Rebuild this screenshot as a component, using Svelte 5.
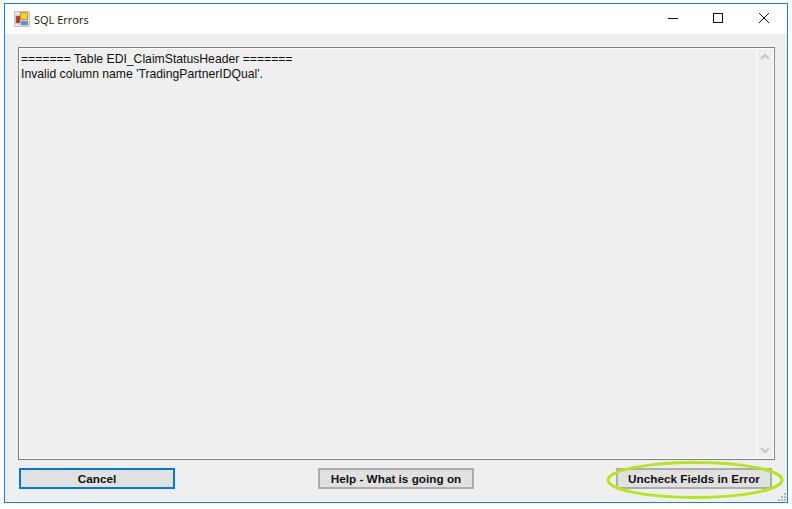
<script lang="ts">
	const lines = ['======= Table EDI_ClaimStatusHeader =======', "Invalid column name 'TradingPartnerIDQual'."];
</script>

<div class="page">
	<div class="window">
		<header class="titlebar">
			<svg class="app-icon" width="16" height="16" viewBox="0 0 16 16">
				<rect x="0.5" y="0.5" width="15" height="15" fill="#e4e4e4" stroke="#c4c4c4" />
				<rect x="2" y="5" width="4" height="7" fill="#c8261c" stroke="#8c8c8c" stroke-width="0.6" />
				<rect x="6.5" y="1.5" width="7" height="7" fill="#f7c92e" stroke="#b98a18" stroke-width="0.8" />
				<rect x="7" y="10" width="7" height="4" fill="#5b8fd6" stroke="#8aa4c8" stroke-width="0.6" />
			</svg>
			<span class="title">SQL Errors</span>
			<div class="controls">
				<svg width="46" height="30" viewBox="0 0 46 30"><path d="M19 14.5h10" stroke="#111" fill="none" /></svg>
				<svg width="46" height="30" viewBox="0 0 46 30"><rect x="18.5" y="9.5" width="9" height="9" stroke="#111" fill="none" /></svg>
				<svg width="46" height="30" viewBox="0 0 46 30"><path d="M18 9l10 10M28 9l-10 10" stroke="#111" fill="none" /></svg>
			</div>
		</header>
		<main class="body">
			<div class="textbox">
				<div class="text">
					{#each lines as line}
						<div>{line}</div>
					{/each}
				</div>
				<div class="scrollbar">
					<svg width="16" height="16" viewBox="0 0 16 16"><path d="M4 10l4-4 4 4" stroke="#c6c6c6" stroke-width="2" fill="none" /></svg>
					<svg width="16" height="16" viewBox="0 0 16 16"><path d="M4 6l4 4 4-4" stroke="#c6c6c6" stroke-width="2" fill="none" /></svg>
				</div>
			</div>
			<div class="actions">
				<button class="btn primary">Cancel</button>
				<button class="btn help">Help - What is going on</button>
				<button class="btn uncheck">Uncheck Fields in Error</button>
			</div>
			<svg class="grip" width="8" height="8" viewBox="0 0 8 8">
				<path d="M6 0h2v2H6zM3 3h2v2H3zM6 3h2v2H6zM0 6h2v2H0zM3 6h2v2H3zM6 6h2v2H6z" fill="#b8b8b8" />
			</svg>
		</main>
		<svg class="highlight" width="178" height="40" viewBox="0 0 178 40">
			<ellipse cx="89" cy="20" rx="87" ry="17.5" fill="none" stroke="#b5e61d" stroke-width="3" />
		</svg>
	</div>
</div>

<style>
	:global(body) {
		margin: 0;
		background: #fff;
	}

	.page {
		width: 792px;
		height: 509px;
		padding: 3px 4px 6px 4px;
		box-sizing: border-box;
		font-family: 'Liberation Sans', Arial, sans-serif;
		color: #000;
	}

	.window {
		position: relative;
		display: flex;
		flex-direction: column;
		width: 784px;
		height: 500px;
		box-sizing: border-box;
		border: 1px solid #1883d7;
		background: #efefef;
	}

	.titlebar {
		display: flex;
		align-items: center;
		height: 30px;
		background: #fff;
		padding-left: 9px;
	}

	.app-icon {
		margin-top: -1px;
	}

	.title {
		margin-left: 4px;
		font-family: 'Open Sans', sans-serif;
		font-size: 11px;
		color: #111;
	}

	.controls {
		display: flex;
		margin-left: auto;
	}

	.body {
		position: relative;
		flex: 1;
		padding: 13px 12px 0 13px;
	}

	.textbox {
		display: flex;
		height: 413px;
		box-sizing: border-box;
		border: 1px solid #7f7f7f;
		border-right-color: #8a8a8a;
		box-shadow: inset 0 0 0 1px #fff;
		background: #efefef;
		padding: 1px;
	}

	.text {
		flex: 1;
		padding: 3px 0 0 1px;
		font-size: 12.2px;
		line-height: 15px;
		color: #111;
	}

	.scrollbar {
		display: flex;
		flex-direction: column;
		justify-content: space-between;
		width: 16px;
		border-left: 1px solid #fff;
	}

	.actions {
		display: flex;
		justify-content: space-between;
		align-items: center;
		margin-top: 8px;
		padding: 0 2px 0 1px;
	}

	.btn {
		height: 21px;
		box-sizing: border-box;
		padding: 0 0 1px;
		border: 2px solid #adadad;
		background: #e1e1e1;
		font-family: 'Liberation Sans', Arial, sans-serif;
		font-size: 11.75px;
		font-weight: 700;
		color: #111;
	}

	.primary {
		width: 156px;
		border-color: #0078d7;
	}

	.help {
		width: 156px;
		margin-left: 1px;
	}

	.uncheck {
		width: 156px;
		margin-right: 1px;
	}

	.grip {
		position: absolute;
		right: 1px;
		bottom: 1px;
	}

	.highlight {
		position: absolute;
		left: 601px;
		top: 456px;
	}
</style>
